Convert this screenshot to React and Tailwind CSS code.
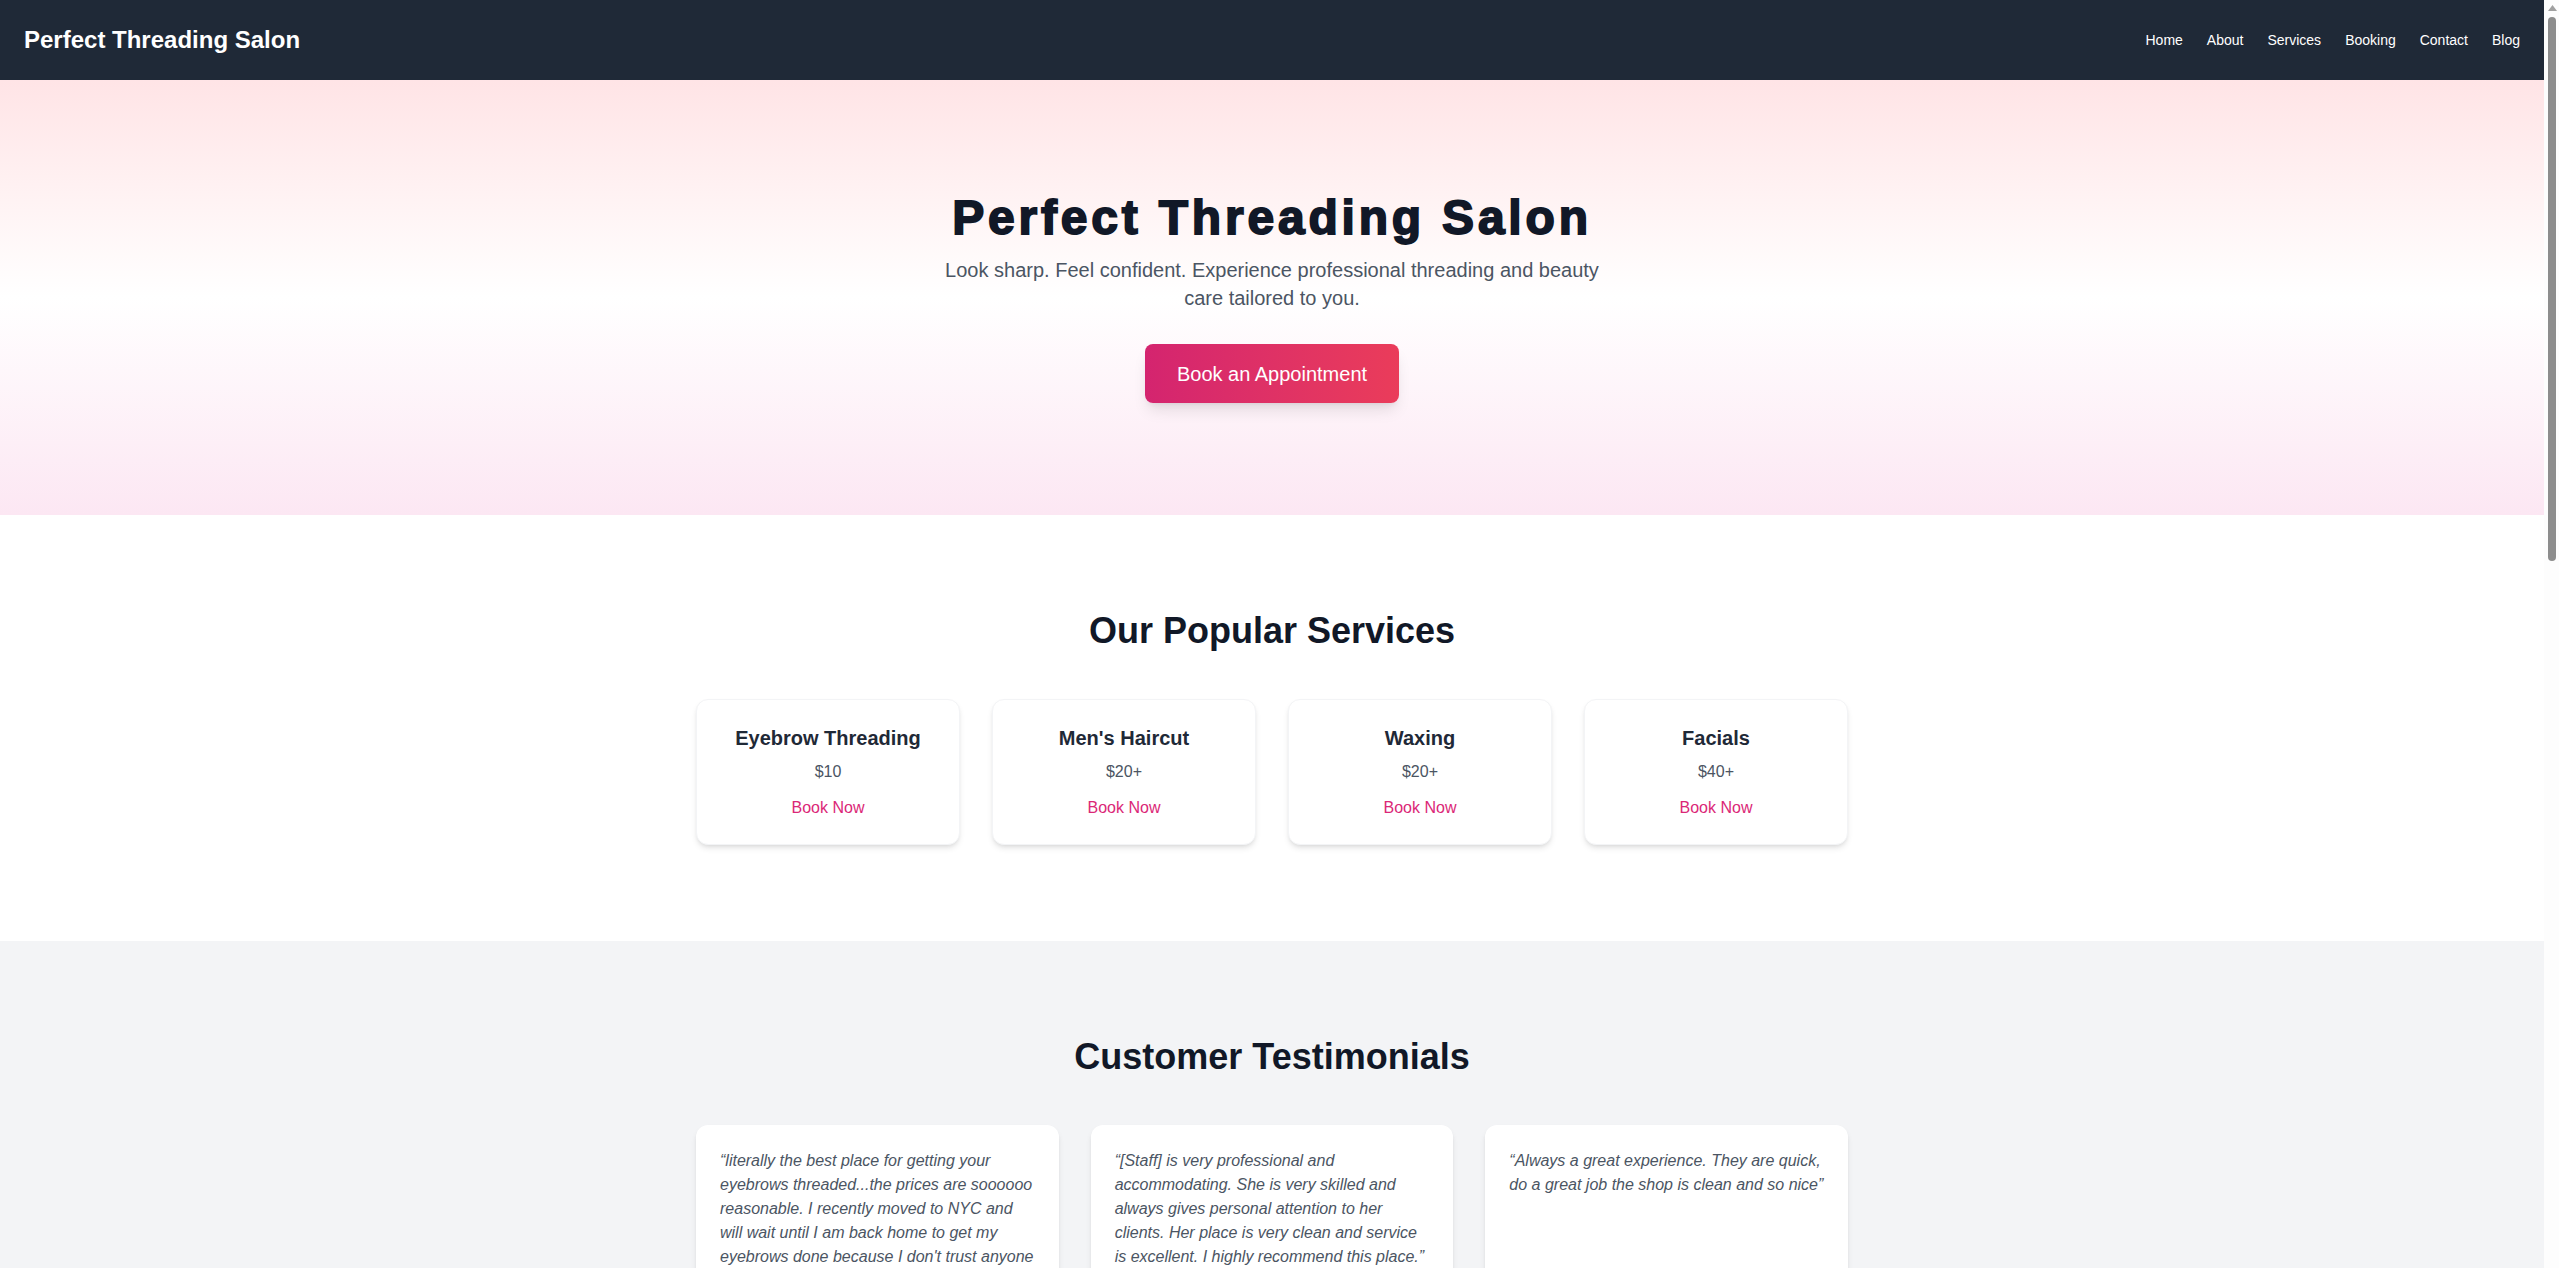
import React from "react";

const services = [
  { name: "Eyebrow Threading", price: "$10" },
  { name: "Men's Haircut", price: "$20+" },
  { name: "Waxing", price: "$20+" },
  { name: "Facials", price: "$40+" },
];

const testimonials = [
  "\u201Cliterally the best place for getting your eyebrows threaded...the prices are soooooo reasonable. I recently moved to NYC and will wait until I am back home to get my eyebrows done because I don't trust anyone else with my brows!\u201D",
  "\u201C[Staff] is very professional and accommodating. She is very skilled and always gives personal attention to her clients. Her place is very clean and service is excellent. I highly recommend this place.\u201D",
  "\u201CAlways a great experience. They are quick, do a great job the shop is clean and so nice\u201D",
];

const navLinks = ["Home", "About", "Services", "Booking", "Contact", "Blog"];

function Scrollbar() {
  return (
    <div className="w-[15px] shrink-0 h-screen bg-[#fdfdfd] flex flex-col items-center">
      <svg width="9" height="6" viewBox="0 0 9 6" className="mt-[5px] ml-[1px]">
        <polygon points="4.5,0 9,6 0,6" fill="#a0a0a0" />
      </svg>
      <div className="mt-[6px] ml-[1px] w-2 h-[544px] rounded-full bg-[#8d8d8d]" />
    </div>
  );
}

export default function App() {
  return (
    <div className="flex h-screen overflow-hidden bg-white text-[#111827] font-['Liberation_Sans',Arial,sans-serif]">
      <div className="flex-1 min-w-0 h-screen overflow-hidden">
        {/* Navbar */}
        <nav className="bg-[#1f2937] px-6 py-6 flex items-center justify-between">
          <a href="#" className="text-2xl font-bold text-white">Perfect Threading Salon</a>
          <ul className="flex items-center gap-6 text-sm text-white">
            {navLinks.map((l) => (
              <li key={l}>
                <a href="#">{l}</a>
              </li>
            ))}
          </ul>
        </nav>

        {/* Hero */}
        <section className="bg-gradient-to-b from-[#ffe4e6] via-white to-[#fce7f3] py-28 px-6 text-center">
          <h1 className="text-5xl leading-none font-black tracking-[3.8px] text-[#111827] [-webkit-text-stroke:1.8px_#111827] mt-[2px] mb-[14px]">
            Perfect Threading Salon
          </h1>
          <p className="max-w-2xl mx-auto text-xl leading-7 text-[#4b5563]">
            Look sharp. Feel confident. Experience professional threading and beauty care tailored to you.
          </p>
          <a
            href="#"
            className="inline-block mt-8 px-8 py-[15.5px] text-xl leading-7 text-white rounded-lg shadow-lg bg-gradient-to-r from-[#d4246f] to-[#ea3c5a]"
          >
            Book an Appointment
          </a>
        </section>

        {/* Services */}
        <section className="py-24 px-6 bg-white">
          <h2 className="text-4xl font-bold text-center mb-12 text-[#111827]">Our Popular Services</h2>
          <div className="max-w-6xl mx-auto grid grid-cols-4 gap-8">
            {services.map((s) => (
              <div key={s.name} className="bg-white rounded-xl shadow-md border border-gray-100 p-6 text-center">
                <h3 className="text-xl font-bold text-[#1f2937]">{s.name}</h3>
                <p className="mt-2 text-[#4b5563]">{s.price}</p>
                <a href="#" className="block mt-3 text-[#db2777]">Book Now</a>
              </div>
            ))}
          </div>
        </section>

        {/* Testimonials */}
        <section className="py-24 px-6 bg-[#f3f4f6]">
          <h2 className="text-4xl font-bold text-center mb-12 text-[#111827]">Customer Testimonials</h2>
          <div className="max-w-6xl mx-auto grid grid-cols-3 gap-8">
            {testimonials.map((t, i) => (
              <div key={i} className="bg-white rounded-xl shadow-md p-6">
                <p className="italic text-[#4b5563]">{t}</p>
              </div>
            ))}
          </div>
        </section>

        {/* Booking */}
        <section className="py-24 px-6 bg-white">
          <h2 className="text-4xl font-bold text-center mb-12 text-[#111827]">Book an Appointment</h2>
          <form className="max-w-xl mx-auto flex flex-col gap-4">
            <input className="border border-gray-300 rounded-lg px-4 py-3" placeholder="Your Name" />
            <input className="border border-gray-300 rounded-lg px-4 py-3" placeholder="Phone Number" />
            <input className="border border-gray-300 rounded-lg px-4 py-3" placeholder="Email Address" />
            <select className="border border-gray-300 rounded-lg px-4 py-3 text-[#4b5563]">
              <option>Select a Service</option>
            </select>
            <input className="border border-gray-300 rounded-lg px-4 py-3" placeholder="Preferred Date" />
            <textarea className="border border-gray-300 rounded-lg px-4 py-3 h-32" placeholder="Notes" />
            <button type="button" className="mt-2 px-8 py-4 text-xl text-white rounded-lg bg-gradient-to-r from-[#d4246f] to-[#ea3c5a]">
              Submit Booking
            </button>
          </form>
        </section>

        {/* Contact */}
        <section className="py-24 px-6 bg-[#f3f4f6] text-center">
          <h2 className="text-4xl font-bold mb-12 text-[#111827]">Contact Us</h2>
          <div className="max-w-2xl mx-auto flex flex-col gap-3 text-lg text-[#4b5563]">
            <p>123 Main Street, New York, NY</p>
            <p>Phone: (555) 123-4567</p>
            <p>Email: info@perfectthreadingsalon.com</p>
            <p>Open Monday – Sunday, 10am – 8pm</p>
          </div>
        </section>

        {/* Footer */}
        <footer className="bg-[#1f2937] py-16 px-6 text-center text-sm text-gray-300 flex flex-col gap-3">
          <p>Perfect Threading Salon &middot; Threading &middot; Waxing &middot; Facials &middot; Haircuts</p>
          <p>&copy; 2024 Perfect Threading Salon. All rights reserved.</p>
        </footer>
      </div>
      <Scrollbar />
    </div>
  );
}
